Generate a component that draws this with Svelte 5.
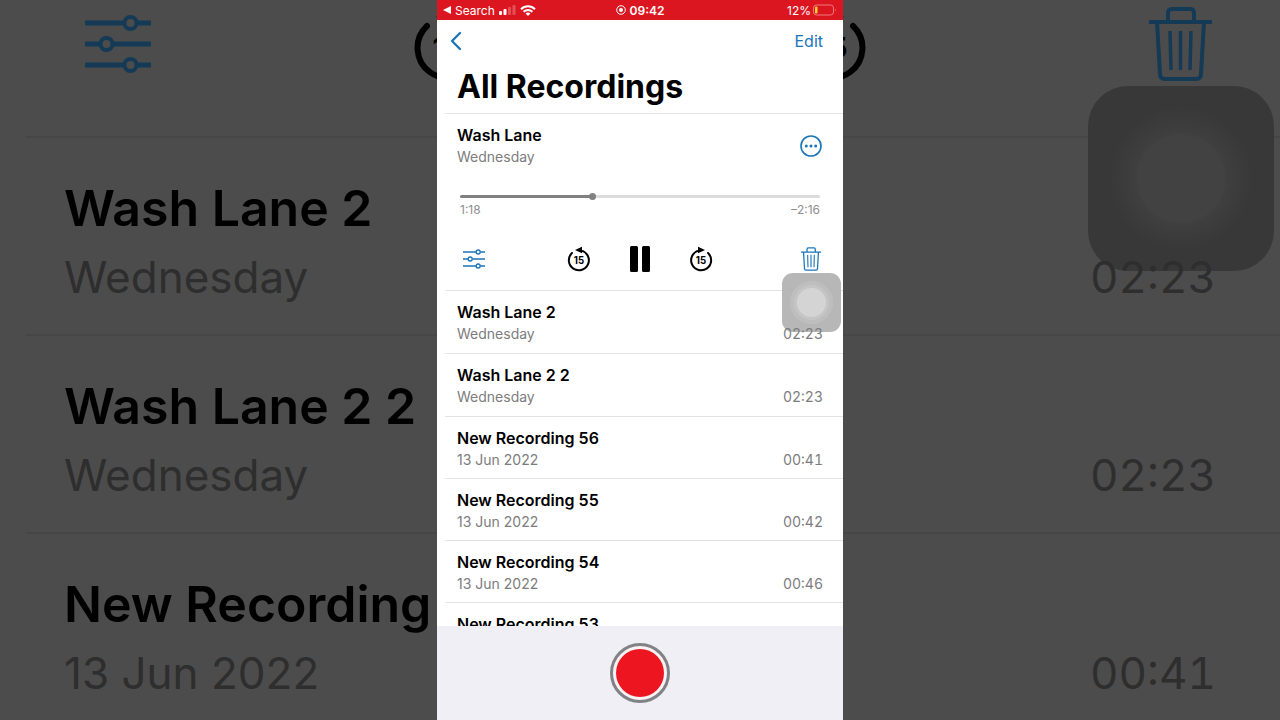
<script>
	let elapsed = $state(78);
	let playing = $state(true);

	const total = 214;

	const recordings = [
		{ name: 'Wash Lane 2', date: 'Wednesday', length: '02:23', recent: true },
		{ name: 'Wash Lane 2 2', date: 'Wednesday', length: '02:23', recent: true },
		{ name: 'New Recording 56', date: '13 Jun 2022', length: '00:41' },
		{ name: 'New Recording 55', date: '13 Jun 2022', length: '00:42' },
		{ name: 'New Recording 54', date: '13 Jun 2022', length: '00:46' },
		{ name: 'New Recording 53', date: '13 Jun 2022', length: '00:38' }
	];

	let progress = $derived((elapsed / total) * 100);

	function clock(s) {
		return Math.floor(s / 60) + ':' + String(s % 60).padStart(2, '0');
	}

	function skip(s) {
		elapsed = Math.min(total, Math.max(0, elapsed + s));
	}
</script>

{#snippet slidersIcon()}
	<svg class="sliders" viewBox="0 0 66 60" fill="none" stroke="currentColor" stroke-width="5">
		<path d="M0 9h39M52 9h14M0 30h15M28 30h38M0 51h39M52 51h14" />
		<circle cx="45.5" cy="9" r="6" stroke-width="4" />
		<circle cx="21.5" cy="30" r="6" stroke-width="4" />
		<circle cx="45.5" cy="51" r="6" stroke-width="4" />
	</svg>
{/snippet}

{#snippet skipIcon(forward)}
	<svg class="skip" viewBox="0 0 72 78">
		<g transform={forward ? 'matrix(-1 0 0 1 72 0)' : null}>
			<path d="M15 21A30 30 0 1 0 43 13.8" fill="none" stroke="currentColor" stroke-width="6" stroke-linecap="round" />
			<path d="M24 12L45 2v20z" fill="currentColor" />
		</g>
		<text x="36" y="53" text-anchor="middle">15</text>
	</svg>
{/snippet}

{#snippet trashIcon()}
	<svg class="trash" viewBox="0 0 63 74" fill="none" stroke="currentColor" stroke-width="4">
		<path d="M0 15h63M19 15V6q0-4 4-4h18q4 0 4 4v9M8 15l3 52q0 5 5 5h31q5 0 5-5l3-52" />
		<path d="M21 24l1 39M31.5 24v39M42 24l-1 39" stroke-width="3.5" />
	</svg>
{/snippet}

<div class="stage">
	<div class="backdrop" aria-hidden="true">
		<div class="big-tools">
			{@render slidersIcon()}
			<div class="big-skips">
				{@render skipIcon(false)}
				{@render skipIcon(true)}
			</div>
			{@render trashIcon()}
		</div>
		<div class="big-touch"></div>
		{#each recordings.slice(0, 3) as rec}
			<div class="big-row">
				<div class="name">{rec.name}</div>
				<div class="meta">
					<span>{rec.date}</span>
					<span class="length">{rec.length}</span>
				</div>
			</div>
		{/each}
	</div>

	<main class="phone">
		<div class="status">
			<div class="status-left">
				<svg width="8" height="8" viewBox="0 0 8 8"><path d="M0 4l8-4v8z" fill="#fff" /></svg>
				<span>Search</span>
				<svg width="17" height="10" viewBox="0 0 17 10" fill="#fff">
					<rect x="0" y="6" width="3" height="4" rx="1" />
					<rect x="4.5" y="4" width="3" height="6" rx="1" />
					<rect x="9" y="2" width="3" height="8" rx="1" opacity=".25" />
					<rect x="13.5" y="0" width="3" height="10" rx="1" opacity=".25" />
				</svg>
				<svg width="16" height="11" viewBox="0 0 16 11" fill="none" stroke="#fff" stroke-width="2">
					<path d="M1 4.200a10 10 0 0 1 14 0M3.600 6.800a6.300 6.300 0 0 1 8.800 0" />
					<path d="M8 11L5.600 8.600a3.500 3.500 0 0 1 4.800 0z" fill="#fff" stroke="none" />
				</svg>
			</div>
			<div class="status-time">
				<svg width="10" height="10" viewBox="0 0 10 10">
					<circle cx="5" cy="5" r="4.3" fill="none" stroke="#fff" />
					<circle cx="5" cy="5" r="2" fill="#fff" />
				</svg>
				<b>09:42</b>
			</div>
			<div class="status-right">
				<span>12%</span>
				<svg width="24" height="12" viewBox="0 0 24 12">
					<rect x=".5" y="1" width="20" height="10" rx="3" fill="none" stroke="#f0777d" />
					<rect x="2" y="2.5" width="2.5" height="7" rx="1" fill="#ffd02e" />
					<path d="M22 4.300q1.500 1.700 0 3.400z" fill="#f0777d" />
				</svg>
			</div>
		</div>

		<header>
			<nav>
				<button class="link" aria-label="Back">
					<svg width="12" height="20" viewBox="0 0 12 20" fill="none" stroke="currentColor" stroke-width="2.3" stroke-linecap="round" stroke-linejoin="round">
						<path d="M10 2L2 10l8 8" />
					</svg>
				</button>
				<button class="link">Edit</button>
			</nav>
			<h1>All Recordings</h1>
		</header>

		<section class="player">
			<div class="player-head">
				<div>
					<div class="name">Wash Lane</div>
					<div class="meta">Wednesday</div>
				</div>
				<button class="link" aria-label="More">
					<svg width="24" height="24" viewBox="0 0 24 24">
						<circle cx="12" cy="12" r="10" fill="none" stroke="currentColor" stroke-width="1.6" />
						<g fill="currentColor">
							<circle cx="7.3" cy="12" r="1.5" />
							<circle cx="12" cy="12" r="1.5" />
							<circle cx="16.7" cy="12" r="1.5" />
						</g>
					</svg>
				</button>
			</div>

			<div class="scrub">
				<input type="range" min="0" max={total} bind:value={elapsed} aria-label="Position" style="--progress: {progress}%">
				<div class="times">
					<span>{clock(elapsed)}</span>
					<span>–{clock(total - elapsed)}</span>
				</div>
			</div>

			<div class="controls">
				<button class="link" aria-label="Options">{@render slidersIcon()}</button>
				<div class="transport">
					<button aria-label="Back 15 seconds" onclick={() => skip(-15)}>{@render skipIcon(false)}</button>
					<button aria-label={playing ? 'Pause' : 'Play'} onclick={() => playing = !playing}>
						<svg width="22" height="26" viewBox="0 0 22 26" fill="currentColor">
							{#if playing}
								<rect x="1" y="0" width="8" height="26" rx="1.5" />
								<rect x="13" y="0" width="8" height="26" rx="1.5" />
							{:else}
								<path d="M2 1l19 12L2 25z" />
							{/if}
						</svg>
					</button>
					<button aria-label="Forward 15 seconds" onclick={() => skip(15)}>{@render skipIcon(true)}</button>
				</div>
				<button class="link" aria-label="Delete">{@render trashIcon()}</button>
			</div>
		</section>

		<button class="touch" aria-label="AssistiveTouch"></button>

		<ul>
			{#each recordings as rec}
				<li class:recent={rec.recent}>
					<div class="name">{rec.name}</div>
					<div class="meta">
						<span>{rec.date}</span>
						<span class="length">{rec.length}</span>
					</div>
				</li>
			{/each}
		</ul>

		<footer>
			<button class="record" aria-label="Record"><span></span></button>
		</footer>
	</main>
</div>

<style>
	:global(body) {
		margin: 0;
		background: #4c4c4c;
	}

	.stage {
		display: grid;
		height: 100vh;
		overflow: hidden;
		font-family: Inter, "Liberation Sans", sans-serif;
		color: #000;
	}

	.stage > * {
		grid-area: 1 / 1;
		min-height: 0;
	}

	svg {
		display: block;
	}

	button {
		padding: 0;
		border: 0;
		background: none;
		font: inherit;
		color: #000;
		cursor: pointer;
	}

	.link {
		color: #1a75b8;
	}

	.skip text {
		font-size: 29px;
		font-weight: 700;
	}

	.name {
		font-size: 16px;
		font-weight: 600;
		line-height: 22px;
	}

	.meta {
		display: flex;
		justify-content: space-between;
		font-size: 14px;
		line-height: 22px;
		color: #7c7c7e;
	}

	.length {
		position: relative;
		font-variant-numeric: tabular-nums;
	}

	/* enlarged, darkened copy of the list behind the phone */

	.backdrop {
		position: relative;
		overflow: hidden;
		background: #4c4c4c;
	}

	.big-tools {
		display: grid;
		grid-template-columns: 1fr auto 1fr;
		align-items: center;
		height: 88px;
		padding: 0 68px 48px;
		color: #143a55;
	}

	.big-tools .sliders {
		width: 66px;
		height: 60px;
		margin-left: 17px;
	}

	.big-tools .trash {
		width: 63px;
		height: 74px;
		justify-self: end;
	}

	.big-skips {
		display: flex;
		gap: 312px;
		color: #000;
	}

	.big-skips .skip {
		width: 72px;
		height: 78px;
	}

	.big-row {
		box-sizing: border-box;
		height: 198px;
		margin-left: 26px;
		padding: 36px 64px 0 38px;
		border-top: 2px solid #464646;
	}

	.big-row .name {
		font-size: 50px;
		line-height: 68px;
	}

	.big-row .meta {
		font-size: 44px;
		line-height: 70px;
		color: #2e2e2e;
	}

	.big-touch {
		position: absolute;
		top: 86px;
		right: 6px;
		width: 186px;
		height: 185px;
		border-radius: 40px;
		background: radial-gradient(circle, #424242 43px, #3f3f3f 46px, #383838 72px);
	}

	/* phone */

	.phone {
		position: relative;
		display: flex;
		flex-direction: column;
		justify-self: center;
		height: 100vh;
		max-width: 100%;
		aspect-ratio: 203 / 360;
		background: #fff;
		overflow: hidden;
	}

	.status {
		display: grid;
		grid-template-columns: 1fr auto 1fr;
		align-items: center;
		height: 20px;
		flex: none;
		padding: 0 6px;
		background: #dc1620;
		color: #fff;
		font-size: 12px;
	}

	.status > div {
		display: flex;
		align-items: center;
		gap: 4px;
	}

	.status .status-right {
		justify-content: flex-end;
		gap: 2px;
	}

	.status b {
		font-weight: 600;
	}

	header {
		flex: none;
		padding: 0 20px 0 13px;
	}

	nav {
		display: flex;
		justify-content: space-between;
		align-items: center;
		height: 42px;
		font-size: 16px;
	}

	h1 {
		margin: 0 0 0 7px;
		padding: 4px 0 6px;
		font-size: 32px;
		font-weight: 700;
		line-height: 41px;
	}

	.player {
		flex: none;
		box-sizing: border-box;
		height: 177px;
		margin-left: 8px;
		padding: 10px 20px 0 12px;
		border-top: 1px solid #e3e3e5;
	}

	.player-head {
		display: flex;
		justify-content: space-between;
		align-items: center;
	}

	.scrub {
		margin: 22px 3px 0;
	}

	input {
		display: block;
		appearance: none;
		width: 100%;
		height: 12px;
		margin: 0;
		background: none;
	}

	input::-webkit-slider-runnable-track {
		height: 3px;
		border-radius: 2px;
		background: linear-gradient(90deg, #808080 var(--progress), #dcdcdc var(--progress));
	}

	input::-webkit-slider-thumb {
		appearance: none;
		width: 7px;
		height: 7px;
		margin-top: -2px;
		border-radius: 50%;
		background: #808080;
	}

	.times {
		display: flex;
		justify-content: space-between;
		font-size: 12px;
		line-height: 16px;
		color: #8e8e90;
	}

	.controls {
		display: grid;
		grid-template-columns: 1fr auto 1fr;
		align-items: center;
		height: 26px;
		margin-top: 28px;
		padding: 0 2px;
	}

	.controls > .link:first-child {
		justify-self: start;
		margin-left: 4px;
	}

	.controls > .link:last-child {
		justify-self: end;
	}

	.transport {
		display: flex;
		align-items: center;
		gap: 38px;
	}

	.controls .sliders {
		width: 22px;
		height: 20px;
	}

	.controls .skip {
		width: 24px;
		height: 26px;
	}

	.controls .trash {
		width: 20px;
		height: 24px;
	}

	.touch {
		position: absolute;
		top: 273px;
		right: 2px;
		width: 59px;
		height: 59px;
		border-radius: 11px;
		background: radial-gradient(circle, #d4d4d4 14px, #c5c5c5 15px 17px, #bebebe 18px 21px, transparent 22px), #b3b3b3f0;
	}

	ul {
		flex: 1;
		min-height: 0;
		margin: 0 0 0 8px;
		padding: 0;
		overflow: hidden;
		list-style: none;
	}

	li {
		box-sizing: border-box;
		height: 62px;
		padding: 10px 20px 0 12px;
		border-top: 1px solid #e3e3e5;
	}

	li.recent {
		height: 63px;
	}

	footer {
		display: flex;
		flex: none;
		align-items: center;
		justify-content: center;
		height: 94px;
		background: #f0eff5;
	}

	.record {
		box-sizing: border-box;
		display: grid;
		place-items: center;
		width: 60px;
		height: 60px;
		border: 3px solid #808285;
		border-radius: 50%;
		background: #f8f2f5;
	}

	.record span {
		width: 48px;
		height: 48px;
		border-radius: 50%;
		background: #ed1620;
	}
</style>
